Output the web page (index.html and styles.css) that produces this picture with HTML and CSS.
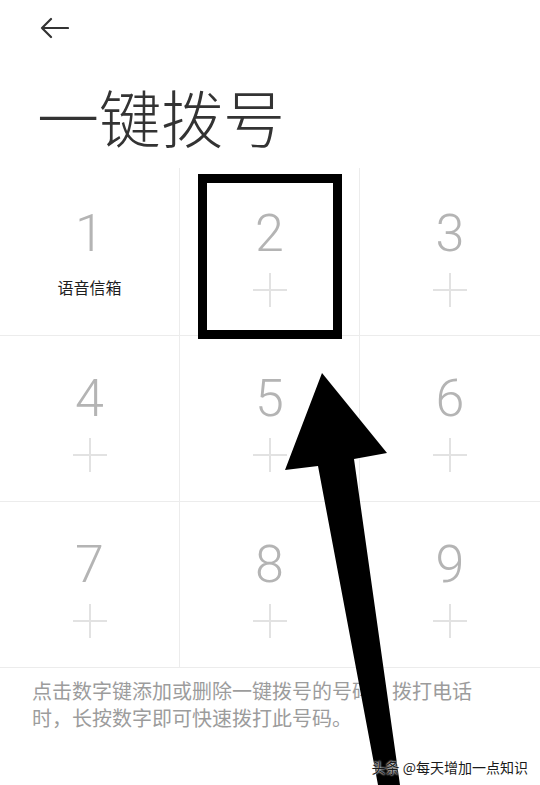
FILE: index.html
```html
<!DOCTYPE html>
<html lang="zh-CN">
<head>
<meta charset="utf-8">
<title>一键拨号</title>
<link rel="stylesheet" href="styles.css">
</head>
<body>
<div class="page">
  <div class="topbar">
    <svg class="back" width="30" height="22" viewBox="0 0 30 22" aria-hidden="true">
      <path d="M29 11H3M12 2L3 11L12 20" fill="none" stroke="#333" stroke-width="2.2" stroke-linecap="round" stroke-linejoin="round"/>
    </svg>
  </div>
  <h1 class="title">一键拨号</h1>

  <div class="grid">
    <div class="cell row1 col">
      <div class="digit">1</div>
      <div class="label">语音信箱</div>
    </div>
    <div class="cell row1 col">
      <div class="digit">2</div>
      <svg class="plus" viewBox="0 0 34 34"><path d="M17 0V34M0 17H34"/></svg>
    </div>
    <div class="cell row1">
      <div class="digit">3</div>
      <svg class="plus" viewBox="0 0 34 34"><path d="M17 0V34M0 17H34"/></svg>
    </div>

    <div class="cell row2 col">
      <div class="digit">4</div>
      <svg class="plus" viewBox="0 0 34 34"><path d="M17 0V34M0 17H34"/></svg>
    </div>
    <div class="cell row2 col">
      <div class="digit">5</div>
      <svg class="plus" viewBox="0 0 34 34"><path d="M17 0V34M0 17H34"/></svg>
    </div>
    <div class="cell row2">
      <div class="digit">6</div>
      <svg class="plus" viewBox="0 0 34 34"><path d="M17 0V34M0 17H34"/></svg>
    </div>

    <div class="cell row3 col">
      <div class="digit">7</div>
      <svg class="plus" viewBox="0 0 34 34"><path d="M17 0V34M0 17H34"/></svg>
    </div>
    <div class="cell row3 col">
      <div class="digit">8</div>
      <svg class="plus" viewBox="0 0 34 34"><path d="M17 0V34M0 17H34"/></svg>
    </div>
    <div class="cell row3">
      <div class="digit">9</div>
      <svg class="plus" viewBox="0 0 34 34"><path d="M17 0V34M0 17H34"/></svg>
    </div>
  </div>

  <p class="hint">点击数字键添加或删除一键拨号的号码，拨打电话时，长按数字即可快速拨打此号码。</p>

  <div class="highlight"></div>
  <svg class="arrow" width="540" height="785" viewBox="0 0 540 785" aria-hidden="true">
    <polygon points="322,373 387,453 354,459 400,785 378,785 318,466 285,470" fill="#000"/>
  </svg>
  <div class="watermark">头条 @每天增加一点知识</div>
</div>
</body>
</html>
```

FILE: styles.css
```css
html, body {
  margin: 0;
  padding: 0;
  background: #fff;
}

.page {
  position: relative;
  width: 540px;
  height: 785px;
  overflow: hidden;
  font-family: "Noto Sans CJK SC", "Noto Sans", sans-serif;
}

.topbar {
  height: 56px;
  padding: 17px 0 0 39px;
  box-sizing: border-box;
}

.back {
  display: block;
}

.title {
  margin: 29px 0 0 0;
  padding-left: 37px;
  font-size: 62px;
  line-height: 62px;
  height: 62px;
  font-weight: 300;
  color: #333;
  letter-spacing: 0;
}

.grid {
  margin-top: 21px;
  display: grid;
  grid-template-columns: 180px 180px 180px;
}

.cell {
  box-sizing: border-box;
  border-bottom: 1px solid #ececec;
  display: flex;
  flex-direction: column;
  align-items: center;
}

.cell.col {
  border-right: 1px solid #ececec;
}

.row1 { height: 168px; padding-top: 40px; }
.row2 { height: 166px; padding-top: 37px; }
.row3 { height: 166px; padding-top: 37px; }

.digit {
  font-family: Roboto, "Noto Sans", sans-serif;
  font-weight: 300;
  font-size: 52px;
  line-height: 52px;
  height: 52px;
  color: #b4b4b4;
}

.plus {
  margin-top: 13px;
  width: 34px;
  height: 34px;
  fill: none;
  stroke: #e2e2e2;
  stroke-width: 2;
}

.label {
  margin-top: 16px;
  font-size: 16px;
  line-height: 22px;
  color: #1e1e1e;
}

.hint {
  margin: 9px 0 0 32px;
  width: 452px;
  font-size: 20px;
  line-height: 27px;
  color: #9c9c9c;
}

.highlight {
  position: absolute;
  left: 198px;
  top: 174px;
  width: 144px;
  height: 165px;
  box-sizing: border-box;
  border: 9px solid #000;
}

.arrow {
  position: absolute;
  left: 0;
  top: 0;
}

.watermark {
  position: absolute;
  right: 12px;
  top: 757px;
  font-size: 14px;
  line-height: 20px;
  color: #1a1a1a;
  white-space: nowrap;
  text-shadow: 0 0 2px #fff, 0 0 2px #fff;
}
```
